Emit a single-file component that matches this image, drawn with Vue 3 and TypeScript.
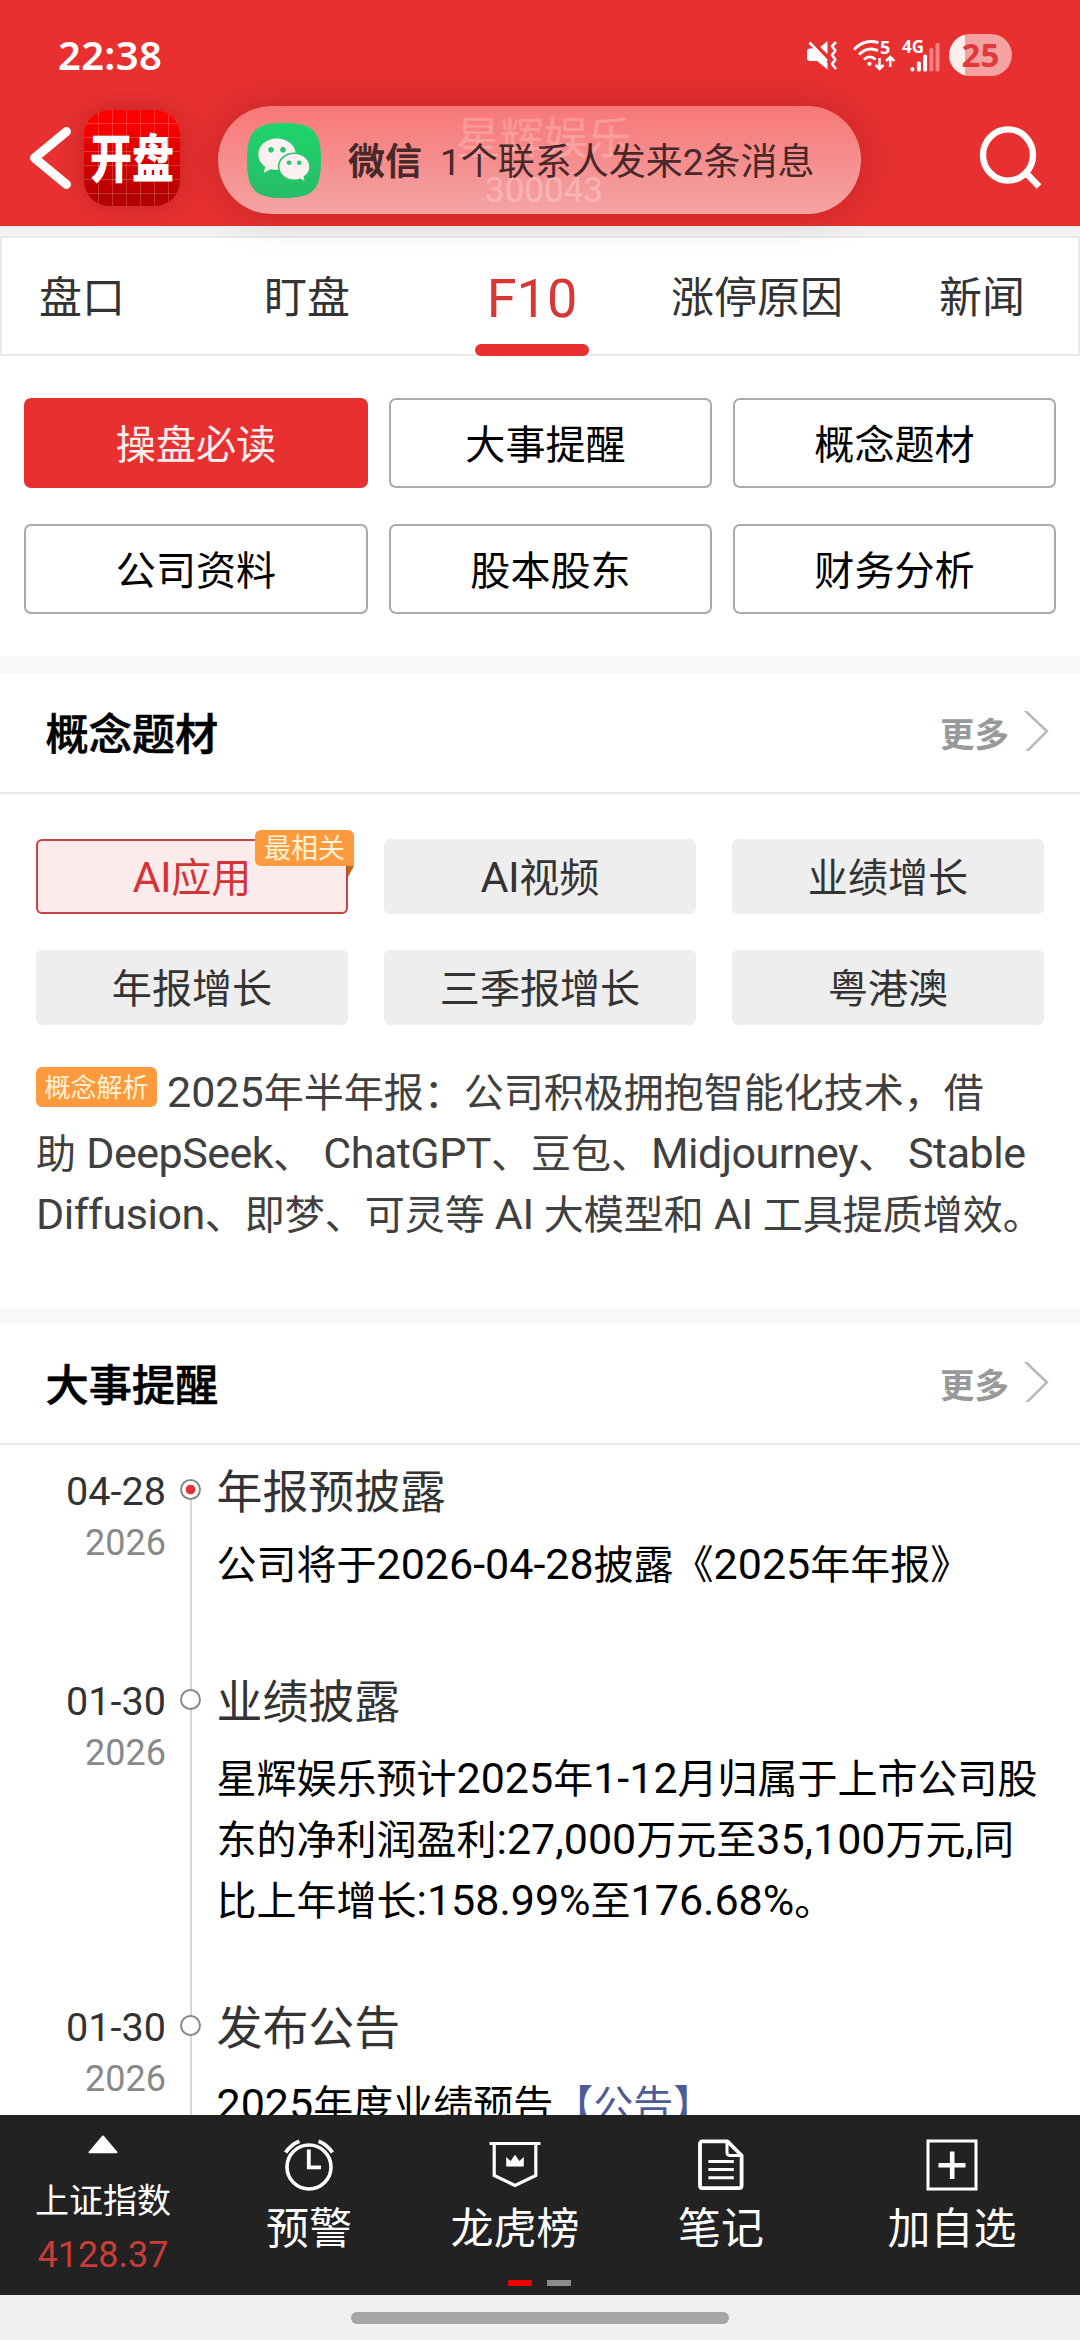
<script setup lang="ts">
import { h, type FunctionalComponent } from 'vue'

interface TimelineEvent {
  day: string
  year: string
  title: string
  lines: string[]
  link?: string
  current?: boolean
}

const tabs = ['盘口', '盯盘', 'F10', '涨停原因', '新闻']
const activeTab = 'F10'

const sections = ['操盘必读', '大事提醒\u00a0', '概念题材', '公司资料', '股本股东', '财务分析']

const concepts = ['AI应用', 'AI视频', '业绩增长', '年报增长', '三季报增长', '粤港澳']

const analysis = [
  '2025年半年报：公司积极拥抱智能化技术，借',
  '助 DeepSeek、 ChatGPT、豆包、Midjourney、 Stable',
  'Diffusion、即梦、可灵等 AI 大模型和 AI 工具提质增效。',
]

const events: TimelineEvent[] = [
  { day: '04-28', year: '2026', title: '年报预披露', lines: ['公司将于2026-04-28披露《2025年年报》'], current: true },
  {
    day: '01-30',
    year: '2026',
    title: '业绩披露',
    lines: ['星辉娱乐预计2025年1-12月归属于上市公司股', '东的净利润盈利:27,000万元至35,100万元,同', '比上年增长:158.99%至176.68%。'],
  },
  { day: '01-30', year: '2026', title: '发布公告', lines: ['2025年度业绩预告'], link: '【公告】' },
]

// Latin runs are set slightly larger than the Chinese text around them, and words a little tighter than numbers
const Mixed: FunctionalComponent<{ text: string }> = (props) =>
  (props.text.match(/[\x20-\x7e]+|[^\x20-\x7e]+/g) ?? []).map((run) =>
    /^[\x20-\x7e]/.test(run) ? h('span', { class: ['latin', { word: /[A-Za-z]/.test(run) }] }, run) : run,
  )
Mixed.props = ['text']
</script>

<template>
  <div class="screen">
    <header class="top">
      <div class="status">
        <span class="time">22:38</span>
        <div class="status-icons">
          <svg class="i-mute" width="30" height="29" viewBox="0 0 30 29" fill="#fff">
            <path d="M3 7.5H6.5L20.5 21.5V28.5L10 20H3Q0 20 0 17V10.5Q0 7.5 3 7.5Z" />
            <path d="M13.2 6L20.5 0V13.2Z" />
            <path d="M2.5 1.5L20 20" stroke="#fff" stroke-width="2.6" />
            <path d="M29 1L25 5.2L28.4 9.6L25 14L28.4 18.6L25 23L29 28" fill="none" stroke="#fff" stroke-width="2.6" stroke-linejoin="round" />
          </svg>
          <svg class="i-wifi" width="42" height="33" viewBox="0 0 42 33" fill="none" stroke="#fff" stroke-width="2.9">
            <path d="M1 10.5C7.5 3.5 16.5 1 25.5 3.6" />
            <path d="M6 15.5C11.5 10 18.5 8.6 25 11.6" />
            <path d="M11 20.5C14.5 17.2 19 17.2 22.5 20.5" />
            <circle cx="16.5" cy="24.8" r="2.1" fill="#fff" stroke="none" />
            <path d="M26.5 19V30M22.5 26L26.5 30L30.5 26M37.2 28V18M33 22L37.2 18L41.4 22" stroke-width="2.5" />
            <text x="27" y="14.6" class="svg-label" font-size="18" stroke="none" fill="#fff">5</text>
          </svg>
          <svg class="i-signal" width="38" height="33" viewBox="0 0 38 33" fill="#fff">
            <text x="0" y="13.6" class="svg-label" font-size="18" textLength="22" lengthAdjust="spacingAndGlyphs">4G</text>
            <rect x="8.4" y="28" width="4" height="4.4" rx="2" />
            <rect x="14.9" y="22.5" width="4" height="9.9" rx="1.5" />
            <rect x="21.1" y="15.5" width="4" height="16.9" rx="1.5" />
            <g opacity="0.4">
              <rect x="27.4" y="9" width="4" height="23.4" rx="1.5" />
              <rect x="33.5" y="4" width="4" height="28.4" rx="1.5" />
            </g>
          </svg>
          <span class="battery">25</span>
        </div>
      </div>
      <div class="bar">
        <svg class="back" width="44" height="66" viewBox="0 0 44 66" fill="none" stroke="#fff" stroke-width="9" stroke-linecap="round" stroke-linejoin="round">
          <path d="M37.5 6.5L5.5 33L37.5 59.5" />
        </svg>
        <div class="logo"><span>开盘</span></div>
        <div class="stock">
          <span class="stock-name">星辉娱乐</span>
          <span class="stock-code">300043</span>
        </div>
        <svg class="search" width="64" height="66" viewBox="0 0 64 66" fill="none" stroke="#fff" stroke-width="6.4">
          <ellipse cx="29" cy="29" rx="25" ry="25.6" />
          <path d="M46.5 46.5L60 60.5" />
        </svg>
      </div>
      <div class="notice">
        <svg width="74" height="75" viewBox="0 0 74 75">
          <defs>
            <linearGradient id="wx" x1="0" y1="0" x2="0" y2="1">
              <stop offset="0" stop-color="#1fd46d" />
              <stop offset="1" stop-color="#26bd66" />
            </linearGradient>
          </defs>
          <path d="M37 0C66 0 74 8 74 37.5S66 75 37 75 0 67 0 37.5 8 0 37 0Z" fill="url(#wx)" />
          <g fill="#fdf0f0">
            <path d="M30 15.6C19.6 15.6 11.3 22.6 11.3 31.4C11.3 36.4 14 40.8 18.2 43.7L16.8 49.8L23.8 46.2C25.8 46.8 28 47 30 47C40.4 47 48.7 40.2 48.7 31.4S40.4 15.6 30 15.6Z" />
            <path d="M47.3 30.2C38.6 30.2 31.6 36.2 31.6 43.7S38.6 57.2 47.3 57.2C49.2 57.2 51.4 56.9 53 56.3L58.6 59L57.4 54C60.9 51.5 63 47.8 63 43.7C63 36.2 56 30.2 47.3 30.2Z" stroke="#24c969" stroke-width="1.6" />
          </g>
          <g fill="#24c969">
            <circle cx="24" cy="26.8" r="2.8" />
            <circle cx="36" cy="26.8" r="2.8" />
            <circle cx="42" cy="39.8" r="2.3" />
            <circle cx="52.2" cy="39.8" r="2.3" />
          </g>
        </svg>
        <b>微信</b>
        <span>1个联系人发来2条消息</span>
      </div>
    </header>

    <main class="content">
      <nav class="tabs">
        <div v-for="tab in tabs" :key="tab" class="tab" :class="{ active: tab === activeTab }">{{ tab }}</div>
      </nav>

      <div class="sections">
        <div v-for="(s, i) in sections" :key="s" class="section-btn" :class="{ on: i === 0 }">{{ s }}</div>
      </div>

      <section class="panel">
        <div class="panel-head">
          <h2>概念题材</h2>
          <span class="more">更多</span>
          <svg width="25" height="40" viewBox="0 0 25 40" fill="none" stroke="#b8b8b8" stroke-width="2.6"><path d="M0 -1.5L22.8 20.3L1.6 41.5" /></svg>
        </div>
        <div class="concepts">
          <div v-for="(c, i) in concepts" :key="c" class="concept" :class="{ on: i === 0 }">
            <Mixed :text="c" />
            <span v-if="i === 0" class="related">最相关</span>
          </div>
        </div>
        <div class="analysis">
          <div v-for="(line, i) in analysis" :key="i" class="line">
            <span v-if="i === 0" class="flag">概念解析</span><Mixed :text="line" />
          </div>
        </div>
      </section>

      <section class="panel">
        <div class="panel-head">
          <h2>大事提醒</h2>
          <span class="more">更多</span>
          <svg width="25" height="40" viewBox="0 0 25 40" fill="none" stroke="#b8b8b8" stroke-width="2.6"><path d="M0 -1.5L22.8 20.3L1.6 41.5" /></svg>
        </div>
        <div class="timeline">
          <div v-for="(e, i) in events" :key="i" class="event" :class="{ current: e.current }">
            <div class="when">
              <span class="day">{{ e.day }}</span>
              <span class="year">{{ e.year }}</span>
            </div>
            <div class="rail"><i class="dot"></i></div>
            <div class="what">
              <h3>{{ e.title }}</h3>
              <div class="body">
                <div v-for="line in e.lines" :key="line" class="line">
                  <Mixed :text="line" /><span v-if="e.link" class="link">{{ e.link }}</span>
                </div>
              </div>
            </div>
          </div>
        </div>
      </section>
    </main>

    <footer class="dock">
      <div class="dock-item index">
        <svg width="30" height="19" viewBox="0 0 30 19"><path d="M15 1.5L28.5 17.3H1.5Z" fill="#fff" stroke="#fff" stroke-width="2" stroke-linejoin="round" /></svg>
        <span class="index-name">上证指数</span>
        <span class="index-value">4128.37</span>
      </div>
      <div class="dock-item">
        <svg width="52" height="52" viewBox="0 0 52 52" fill="none" stroke="#fff" stroke-width="3.6">
          <circle cx="26" cy="28" r="22" />
          <path d="M25.8 10.5V28.3H38" stroke-width="3.8" />
          <path d="M2.6 13.5Q8 5.5 16.4 2.2M49.4 13.5Q44 5.5 35.6 2.2" stroke-width="3.8" />
        </svg>
        <span>预警</span>
      </div>
      <div class="dock-item">
        <svg width="52" height="52" viewBox="0 0 52 52" fill="none" stroke="#fff" stroke-width="3.2">
          <path d="M0.5 4.5H51.5" />
          <path d="M5.2 4.5V36.5L26 46.5L46.8 36.5V4.5" />
          <path d="M17.2 18L21.6 22L26 15.8L30.4 22L34.8 18V27.4H17.2Z" fill="#fff" stroke="none" />
        </svg>
        <span>龙虎榜</span>
      </div>
      <div class="dock-item">
        <svg width="52" height="52" viewBox="0 0 52 52" fill="none" stroke="#fff" stroke-width="3.8" stroke-linejoin="round">
          <path d="M7.5 2.4H32.5L46.6 16.5V46.6Q46.6 49.2 44 49.2H7.5Q5 49.2 5 46.6V5Q5 2.4 7.5 2.4Z" />
          <path d="M32 3V13.5Q32 16.4 34.8 16.4H46" stroke-width="3" />
          <path d="M13.4 22.4H38.8M13.4 30.6H38.8M13.4 38.8H38.8" stroke-width="3" />
        </svg>
        <span>笔记</span>
      </div>
      <div class="dock-item wide">
        <svg width="52" height="52" viewBox="0 0 52 52" fill="none" stroke="#fff">
          <rect x="2" y="2" width="48" height="48" stroke-width="3" />
          <path d="M26.2 12.5V40M12.5 26.2H39.5" stroke-width="4.6" />
        </svg>
        <span>加自选</span>
      </div>
      <div class="pager"><i class="now"></i><i></i></div>
    </footer>
    <div class="gesture"><i></i></div>
  </div>
</template>

<style>
body {
  margin: 0;
}
</style>

<style scoped>
.screen {
  width: 1080px;
  height: 2340px;
  display: flex;
  flex-direction: column;
  overflow: hidden;
  background: #fff;
  font-family: Roboto, 'Noto Sans CJK SC', sans-serif;
  color: #333;
  white-space: nowrap;
}
svg {
  display: block;
  flex: none;
}
.svg-label {
  font-family: 'Noto Sans', sans-serif;
  font-weight: 700;
}

/* header */
.top {
  position: relative;
  z-index: 1;
  height: 226px;
  flex: none;
  background: #e83030;
  color: #fff;
}
.status {
  height: 96px;
  display: flex;
  justify-content: space-between;
  padding: 0 68.5px 0 58px;
}
.time {
  font: 600 40px/110px 'Noto Sans', sans-serif;
  letter-spacing: 0.3px;
}
.status-icons {
  display: flex;
  height: 110px;
  align-items: center;
}
.status-icons svg {
  overflow: visible;
}
.i-wifi {
  margin-left: 16px;
}
.i-signal {
  margin-left: 7px;
}
.battery {
  width: 63px;
  height: 42px;
  margin-left: 9px;
  border-radius: 21px;
  background: linear-gradient(90deg, #fdeeee 16px, #f6a2a2 16px);
  color: #e03a3c;
  font: 700 33px/42px 'Noto Sans', sans-serif;
  text-align: center;
  text-indent: 1px;
}
.bar {
  display: flex;
  align-items: center;
  height: 124px;
  padding: 0 37px 0 29px;
}
.logo {
  width: 96px;
  height: 96px;
  margin-left: 11px;
  border-radius: 25px;
  background:
    repeating-linear-gradient(90deg, transparent 0 13px, rgba(255, 255, 255, 0.2) 13px 14px, transparent 14px 14px) 1px 0,
    repeating-linear-gradient(180deg, transparent 0 13px, rgba(255, 255, 255, 0.2) 13px 14px, transparent 14px 14px),
    linear-gradient(#ff0000 10%, #b40000 90%);
  box-shadow: 0 0 26px rgba(90, 0, 0, 0.25);
  display: flex;
  align-items: center;
  justify-content: center;
}
.logo span {
  font: 900 42px/96px 'Noto Sans CJK SC', sans-serif;
  margin-top: -6px;
  transform: scaleY(1.25);
}
.stock {
  flex: 1;
  display: flex;
  flex-direction: column;
  align-items: center;
  margin-right: 71px;
}
.stock-name {
  font-size: 44px;
  line-height: 56px;
  margin-top: 8px;
}
.stock-code {
  font-size: 35px;
  line-height: 46px;
  margin-top: 1px;
}
.search {
  margin-top: 2px;
}
.notice {
  position: absolute;
  left: 218px;
  top: 106px;
  width: 643px;
  height: 108px;
  box-sizing: border-box;
  padding-left: 29px;
  border-radius: 54px;
  display: flex;
  align-items: center;
  background: linear-gradient(rgba(250, 130, 130, 0.875), rgba(246, 180, 180, 0.875));
  box-shadow: 0 0 40px rgba(60, 0, 0, 0.22);
  color: #47282b;
  font-size: 37px;
  line-height: 54px;
}
.notice b {
  margin: 6px 0 0 27px;
}
.notice span {
  margin: 6px 0 0 18px;
}

/* page */
.content {
  flex: 1;
  min-height: 0;
  overflow: hidden;
}
.tabs {
  margin-top: 10px;
  height: 120px;
  box-sizing: border-box;
  border: 2px solid #e9e9e9;
  display: flex;
  justify-content: center;
  box-shadow: 0 -10px 0 #f2f2f2;
}
.tab {
  position: relative;
  flex: none;
  width: 225px;
  font-size: 43px;
  line-height: 120px;
  text-align: center;
  left: -8px;
}
.tab.active {
  color: #d93636;
  font-size: 54px;
  line-height: 121px;
}
.tab.active::after {
  content: '';
  position: absolute;
  left: 55.5px;
  bottom: -2px;
  width: 114px;
  height: 12px;
  border-radius: 6px;
  background: #e83030;
}
.sections {
  display: grid;
  grid-template-columns: 344px 323px 323px;
  gap: 36px 21px;
  padding: 42px 24px;
}
.section-btn {
  height: 90px;
  box-sizing: border-box;
  border: 2px solid #aaa;
  border-radius: 7px;
  color: #000;
  font-size: 40.1px;
  line-height: 92px;
  text-align: center;
}
.section-btn.on {
  background: #e83030;
  border-color: #e83030;
  color: #fdeeee;
}
.panel {
  border-top: 18px solid #f8f8f8;
}
.panel-head {
  height: 118px;
  border-bottom: 2px solid #e9e9e9;
  display: flex;
  align-items: center;
  padding: 0 31px 0 45.5px;
}
.panel-head h2 {
  flex: 1;
  margin: 5px 0 0;
  color: #000;
  font-size: 43.2px;
  line-height: 60px;
  font-weight: 500;
  -webkit-text-stroke: 0.6px #000;
}
.more {
  margin: 4px 15px 0 0;
  color: #999;
  font-size: 34.5px;
  line-height: 50px;
  font-weight: 700;
}
.panel-head svg {
  margin-top: -4px;
}
.screen :deep(.latin) {
  font-size: 43px;
  line-height: 1px;
}
.screen :deep(.word) {
  letter-spacing: -0.5px;
}
.concepts {
  display: grid;
  grid-template-columns: repeat(3, 312px);
  gap: 36px;
  padding: 45px 36px 38px;
}
.concept {
  position: relative;
  height: 75px;
  border-radius: 6px;
  background: #eee;
  font-size: 40.1px;
  line-height: 80px;
  text-align: center;
}
.concept.on {
  background: #fbebeb;
  box-shadow: inset 0 0 0 2px #c54545;
  color: #d33535;
}
.related {
  position: absolute;
  right: -6px;
  top: -9px;
  width: 99px;
  height: 36px;
  border-radius: 6px 6px 0 6px;
  background: #fd9a3e;
  color: #fff3d8;
  font-size: 27px;
  line-height: 38px;
}
.related::after {
  content: '';
  position: absolute;
  right: 0;
  top: 36px;
  border-top: 11px solid #c26a14;
  border-right: 6px solid transparent;
}
.analysis {
  height: 244px;
  padding-left: 36px;
  color: #404040;
}
.line {
  height: 61px;
  font-size: 40px;
  line-height: 61px;
  white-space: pre;
}
.flag {
  display: inline-block;
  vertical-align: top;
  width: 121px;
  height: 40px;
  margin: 4px 10px 0 0;
  border-radius: 6px;
  background: #fd9a3e;
  color: #fff3d8;
  font-size: 26px;
  line-height: 42px;
  text-align: center;
}

/* timeline */
.event {
  display: flex;
  height: 326px;
}
.event.current {
  height: 210px;
}
.when {
  width: 166px;
  display: flex;
  flex-direction: column;
  align-items: flex-end;
}
.day {
  margin-top: 21px;
  font-size: 39.6px;
  line-height: 52px;
}
.year {
  color: #888;
  font-size: 36px;
  line-height: 50px;
}
.rail {
  width: 21px;
  margin-left: 14px;
  background: linear-gradient(#d6d6d6, #d6d6d6) 10px 0 / 2px 100% no-repeat;
}
.event.current .rail {
  background-position-y: 44px;
}
.dot {
  display: block;
  width: 21px;
  height: 21px;
  box-sizing: border-box;
  margin-top: 34px;
  border: 2px solid #888;
  border-radius: 50%;
  background: #fff;
}
.current .dot {
  background: radial-gradient(circle, #e03232 4.4px, #fff 5.2px);
}
.what {
  margin-left: 15.5px;
}
.what h3 {
  margin: 17px 0 0;
  font-size: 45.9px;
  line-height: 60px;
  font-weight: 400;
}
.body {
  margin-top: 17px;
  color: #000;
}
.current .body {
  margin-top: 13px;
}
.link {
  color: #4d5b96;
}

/* bottom dock */
.dock {
  position: relative;
  height: 180px;
  flex: none;
  display: flex;
  background: #222;
  color: #fff;
}
.dock-item {
  width: 206px;
  display: flex;
  flex-direction: column;
  align-items: center;
  padding-top: 24px;
  box-sizing: border-box;
  font-size: 43px;
}
.dock-item.wide {
  width: 256px;
}
.dock-item > span {
  line-height: 60px;
  margin-top: 8px;
}
.dock-item.index {
  padding-top: 20px;
}
.dock-item > .index-name {
  font-size: 34px;
  line-height: 46px;
  margin-top: 24px;
}
.dock-item > .index-value {
  color: #c93d38;
  font-size: 36px;
  line-height: 46px;
  margin-top: 8px;
}
.pager {
  position: absolute;
  left: 508px;
  top: 165px;
  display: flex;
  gap: 15px;
}
.pager i {
  width: 24px;
  height: 6px;
  background: #8b8b8b;
}
.pager .now {
  background: #f00000;
}
.gesture {
  height: 45px;
  flex: none;
  background: #f0f0f2;
}
.gesture i {
  display: block;
  width: 378px;
  height: 12px;
  margin: 17px auto 0;
  border-radius: 6px;
  background: #a6a6a8;
}
.gesture::before {
  content: '';
  display: table;
}
</style>
